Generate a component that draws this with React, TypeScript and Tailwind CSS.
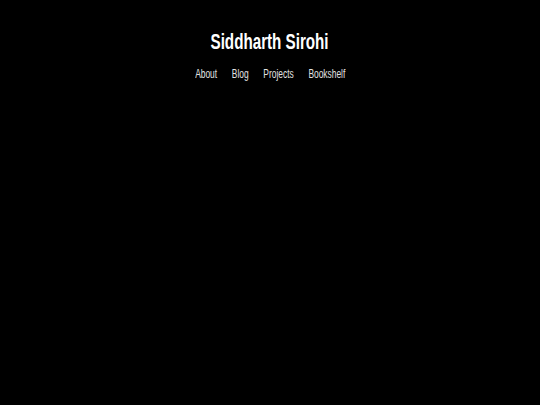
export default function App() {
  const links = ["About", "Blog", "Projects", "Bookshelf"];
  return (
    <div className="min-h-screen w-full bg-black font-['Liberation_Sans',Arial,sans-serif]">
      <header className="flex flex-col items-center pt-[28px]">
        <h1 className="scale-x-[0.69] text-[22px] font-bold leading-[27px] text-white">Siddharth Sirohi</h1>
        <nav className="mt-[12px] flex scale-x-[0.7] gap-[21px] text-[12px] leading-[14px] text-[#e2e2e2]">
          {links.map((l) => (
            <a key={l} href="#">
              {l}
            </a>
          ))}
        </nav>
      </header>
    </div>
  );
}
